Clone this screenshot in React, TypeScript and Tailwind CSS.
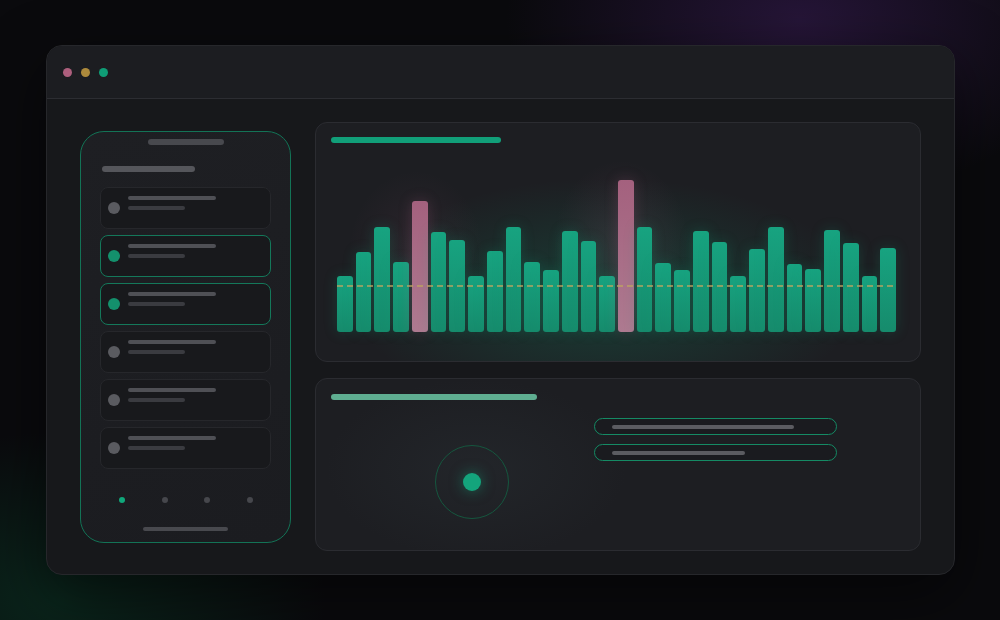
import React from "react";

const bars: { h: number; pink?: boolean }[] = [
  { h: 56 }, { h: 80 }, { h: 105 }, { h: 70 }, { h: 131, pink: true }, { h: 100 }, { h: 92 }, { h: 56 },
  { h: 81 }, { h: 105 }, { h: 70 }, { h: 62 }, { h: 101 }, { h: 91 }, { h: 56 }, { h: 152, pink: true },
  { h: 105 }, { h: 69 }, { h: 62 }, { h: 101 }, { h: 90 }, { h: 56 }, { h: 83 }, { h: 105 },
  { h: 68 }, { h: 63 }, { h: 102 }, { h: 89 }, { h: 56 }, { h: 84 },
];

const items = [false, true, true, false, false, false];

function ListItem({ active }: { active: boolean }) {
  return (
    <div
      className={
        "relative h-[42px] rounded-[8px] border bg-[#18191c] " +
        (active ? "border-[#14785a]" : "border-[#26272b]")
      }
    >
      <div
        className={
          "absolute left-[7px] top-[14px] h-[12px] w-[12px] rounded-full " +
          (active ? "bg-[#14906c]" : "bg-[#5a5b60]")
        }
      />
      <div className="absolute left-[27px] top-[8px] h-[4px] w-[88px] rounded-full bg-[#4f5055]" />
      <div className="absolute left-[27px] top-[18px] h-[4px] w-[57px] rounded-full bg-[#3a3b40]" />
    </div>
  );
}

export default function App() {
  return (
    <div
      className="relative h-[620px] w-[1000px] overflow-hidden bg-[#0a0a0d] pl-[46px] pt-[45px]"
      style={{ fontFamily: "Inter, 'Liberation Sans', sans-serif" }}
    >
      <div className="pointer-events-none absolute inset-0 bg-[radial-gradient(ellipse_420px_260px_at_800px_20px,rgba(60,30,90,0.55),transparent_70%)]" />
      <div className="pointer-events-none absolute inset-0 bg-[radial-gradient(ellipse_380px_240px_at_60px_600px,rgba(10,70,45,0.45),transparent_70%)]" />

      <div className="relative flex h-[530px] w-[909px] flex-col overflow-hidden rounded-[16px] border border-[#26272b] bg-[#17181b] shadow-[0_20px_60px_rgba(0,0,0,0.5)]">
        {/* title bar */}
        <div className="flex h-[53px] shrink-0 items-center gap-[9px] border-b border-[#2c2d32] bg-[#1c1d21] pl-[16px]">
          <div className="h-[9px] w-[9px] rounded-full bg-[#ad5f7d]" />
          <div className="h-[9px] w-[9px] rounded-full bg-[#ad8a3c]" />
          <div className="h-[9px] w-[9px] rounded-full bg-[#0f9d76]" />
        </div>

        {/* body */}
        <div className="flex flex-1 items-start gap-[24px] px-[33px] pt-[23px]">
          {/* phone */}
          <div className="mt-[9px] flex h-[412px] w-[211px] shrink-0 flex-col items-center rounded-[24px] border border-[#137356] bg-[linear-gradient(160deg,#1e1f23,#1b1c20)] pt-[7px]">
            <div className="h-[6px] w-[76px] rounded-full bg-[#48494e]" />
            <div className="mt-[21px] h-[6px] w-[93px] self-start ml-[21px] rounded-full bg-[#55565b]" />
            <div className="mt-[15px] flex w-[171px] flex-col gap-[6px] self-start ml-[19px]">
              {items.map((a, i) => (
                <ListItem key={i} active={a} />
              ))}
            </div>
            <div className="mt-[28px] flex w-[134px] items-center justify-between self-start ml-[38px]">
              <div className="h-[6px] w-[6px] rounded-full bg-[#10a77a]" />
              <div className="h-[6px] w-[6px] rounded-full bg-[#46474c]" />
              <div className="h-[6px] w-[6px] rounded-full bg-[#46474c]" />
              <div className="h-[6px] w-[6px] rounded-full bg-[#46474c]" />
            </div>
            <div className="mt-[24px] h-[4px] w-[85px] rounded-full bg-[#48494e]" />
          </div>

          {/* right column */}
          <div className="flex flex-1 flex-col gap-[16px]">
            {/* chart card */}
            <div className="relative h-[240px] overflow-hidden rounded-[12px] border border-[#2b2c31] bg-[#1d1e22]">
              <div className="pointer-events-none absolute inset-0 bg-[radial-gradient(ellipse_340px_160px_at_290px_175px,rgba(16,160,115,0.24),transparent_75%)]" />
              <div className="pointer-events-none absolute inset-0 bg-[radial-gradient(ellipse_90px_110px_at_305px_120px,rgba(176,90,130,0.14),transparent_75%)]" />
              <div className="pointer-events-none absolute inset-0 bg-[radial-gradient(ellipse_90px_110px_at_100px_130px,rgba(176,90,130,0.1),transparent_75%)]" />
              <div className="relative ml-[15px] mt-[14px] h-[6px] w-[170px] rounded-full bg-[#119f79]" />
              <div className="relative ml-[21px] mt-[34px] flex h-[155px] w-[559px] items-end gap-[3px]">
                {bars.map((b, i) => (
                  <div
                    key={i}
                    className={
                      "flex-1 rounded-[3px] " +
                      (b.pink
                        ? "bg-[linear-gradient(180deg,#a4617e,#ad7a90)] shadow-[0_0_14px_rgba(176,100,135,0.25)]"
                        : "bg-[linear-gradient(180deg,#17a380,#168b6c)] shadow-[0_0_14px_rgba(20,170,125,0.22)]")
                    }
                    style={{ height: b.h }}
                  />
                ))}
                <div className="pointer-events-none absolute bottom-[45px] left-0 right-0 h-[2px] bg-[repeating-linear-gradient(90deg,rgba(190,165,95,0.7)_0px,rgba(190,165,95,0.7)_6px,transparent_6px,transparent_10px)]" />
              </div>
            </div>

            {/* bottom card */}
            <div className="relative h-[173px] overflow-hidden rounded-[12px] border border-[#2b2c31] bg-[#1d1e22]">
              <div className="pointer-events-none absolute inset-0 bg-[radial-gradient(ellipse_200px_120px_at_160px_90px,rgba(40,45,50,0.5),transparent_75%)]" />
              <div className="relative ml-[15px] mt-[15px] h-[6px] w-[206px] rounded-full bg-[#5fae91]" />
              <div className="relative flex items-start">
                <div className="ml-[119px] mt-[45px] flex h-[74px] w-[74px] items-center justify-center rounded-full border border-[#16573f]">
                  <div className="h-[18px] w-[18px] rounded-full bg-[#14a47c] shadow-[0_0_14px_rgba(20,170,125,0.5)]" />
                </div>
                <div className="ml-[85px] mt-[18px] flex w-[243px] flex-col gap-[9px]">
                  <div className="flex h-[17px] items-center rounded-full border border-[#158a64] bg-[#1a1b1f] pl-[17px]">
                    <div className="h-[4px] w-[182px] rounded-full bg-[#5b5c61]" />
                  </div>
                  <div className="flex h-[17px] items-center rounded-full border border-[#158a64] bg-[#1a1b1f] pl-[17px]">
                    <div className="h-[4px] w-[133px] rounded-full bg-[#5b5c61]" />
                  </div>
                </div>
              </div>
            </div>
          </div>
        </div>
      </div>
    </div>
  );
}
